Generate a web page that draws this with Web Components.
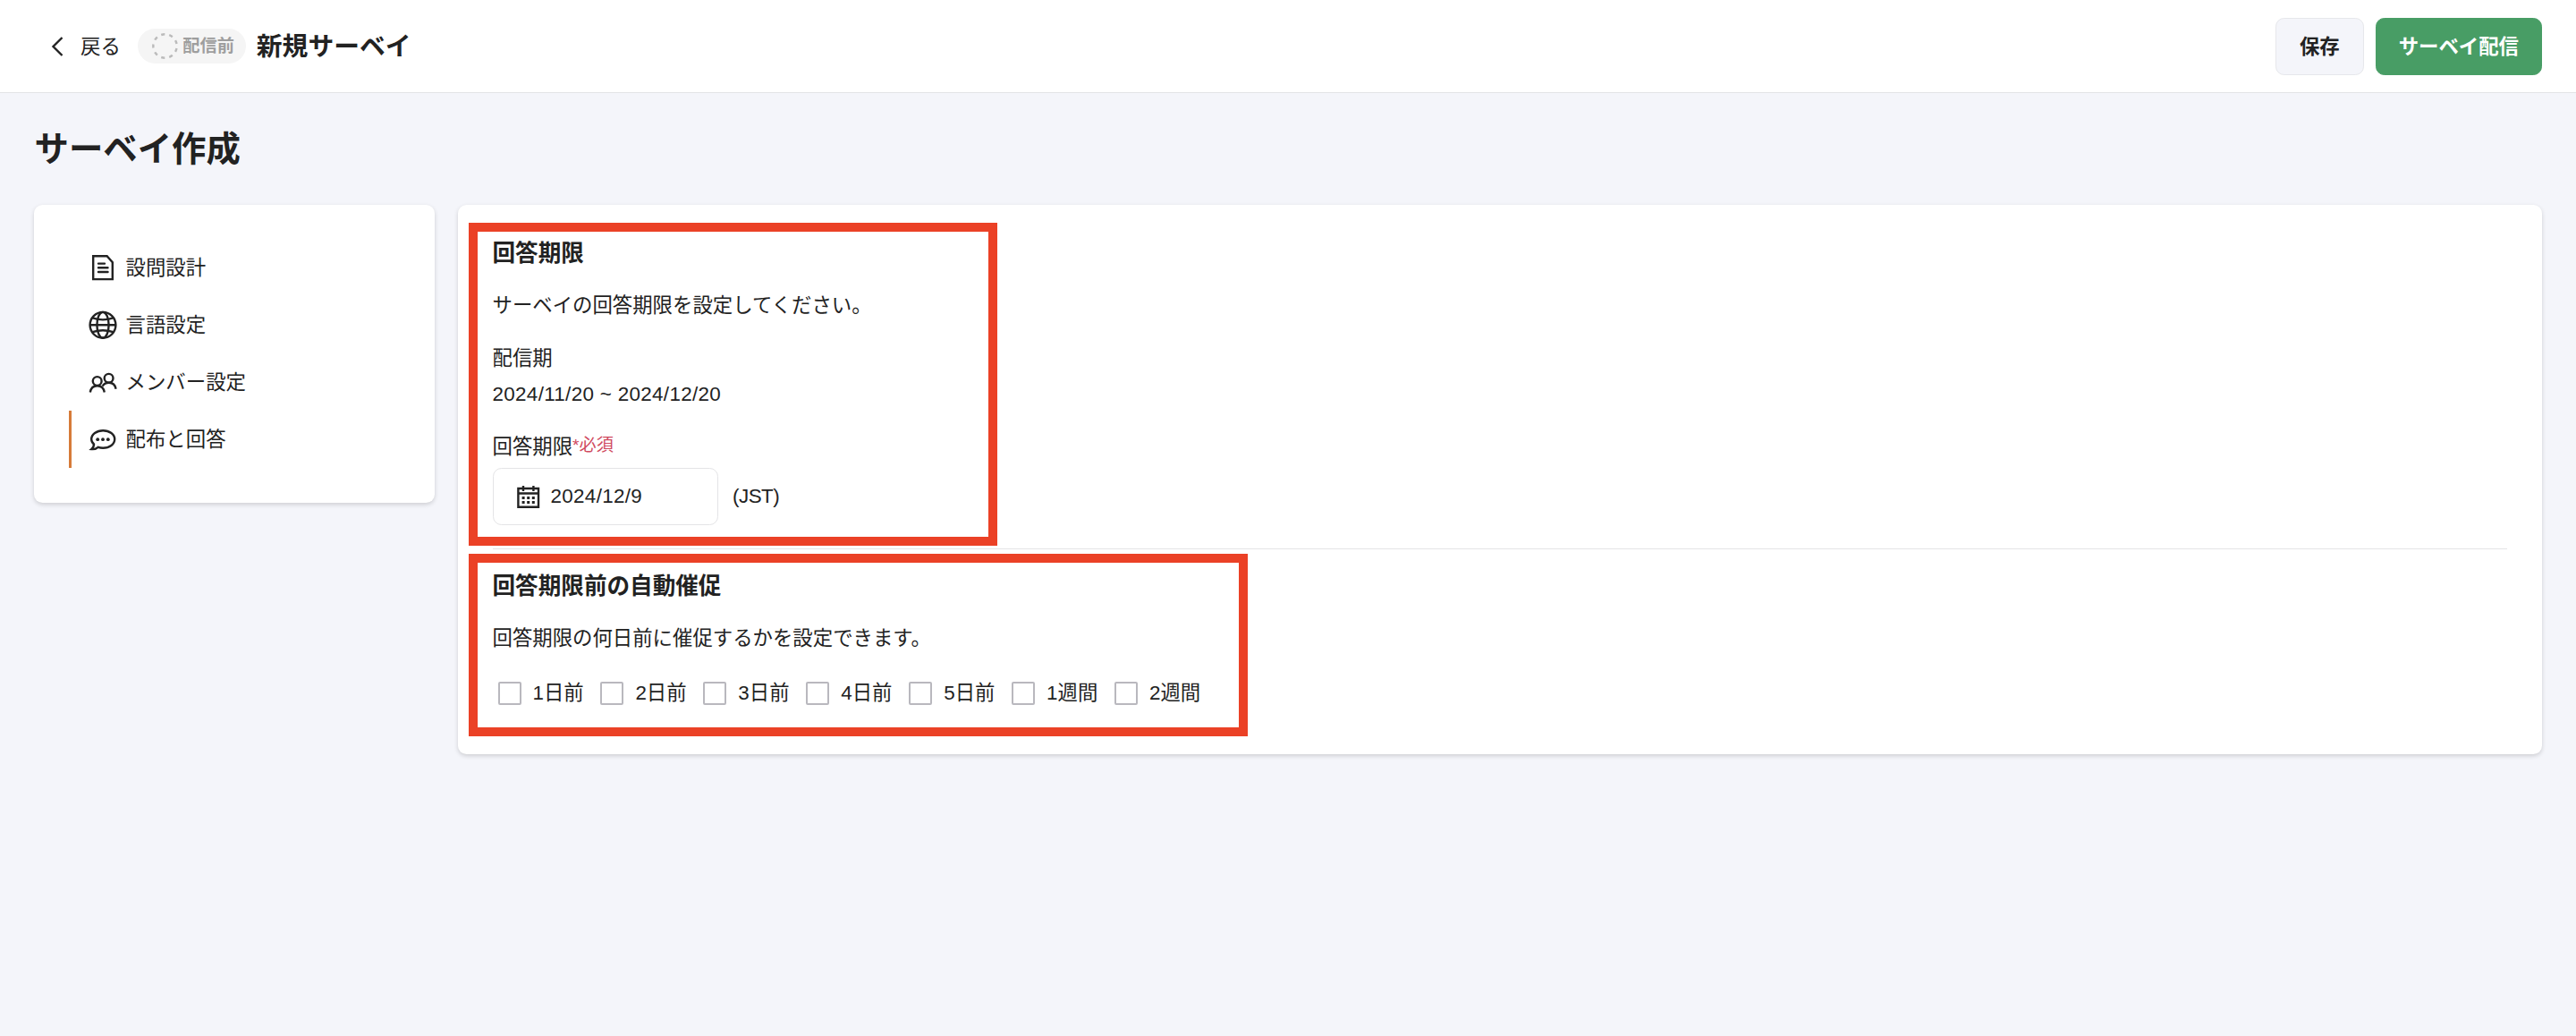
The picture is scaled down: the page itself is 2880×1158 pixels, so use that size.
<!DOCTYPE html>
<html lang="ja">
<head>
<meta charset="utf-8">
<title>新規サーベイ</title>
<style>
  body {
    margin: 0;
    min-height: 100vh;
    background: #f4f5fa;
    color: #222;
    font: 22.4px/32px "Liberation Sans", "Noto Sans CJK JP", sans-serif;
  }
  .columns {
    display: flex;
    align-items: flex-start;
    gap: 26px;
    padding: 0 38px;
  }
  side-menu {
    flex: 0 0 448px;
  }
  survey-panel {
    flex: 1;
  }
</style>
</head>
<body>
<survey-header>
  <status-badge slot="status">配信前</status-badge>
  <span slot="title">新規サーベイ</span>
  <action-button slot="actions">保存</action-button>
  <action-button slot="actions" class="primary">サーベイ配信</action-button>
</survey-header>
<page-title>サーベイ作成</page-title>
<div class="columns">
  <side-menu>
    <menu-item icon="document">設問設計</menu-item>
    <menu-item icon="globe">言語設定</menu-item>
    <menu-item icon="members">メンバー設定</menu-item>
    <menu-item icon="chat" class="active">配布と回答</menu-item>
  </side-menu>
  <survey-panel>
    <panel-section style="--frame-width: 591px; --frame-height: 361px">
      <span slot="heading">回答期限</span>
      <span slot="description">サーベイの回答期限を設定してください。</span>
      <form-field label="配信期" style="--field-gap: 8px"><span style="letter-spacing: 0.33px">2024/11/20 ~ 2024/12/20</span></form-field>
      <form-field label="回答期限" required><date-input value="2024/12/9">(JST)</date-input></form-field>
    </panel-section>
    <panel-section style="--frame-top: -21px; --frame-width: 871px; --frame-height: 204px">
      <span slot="heading">回答期限前の自動催促</span>
      <span slot="description">回答期限の何日前に催促するかを設定できます。</span>
      <reminder-options values="1日前,2日前,3日前,4日前,5日前,1週間,2週間"></reminder-options>
    </panel-section>
  </survey-panel>
</div>

<script>
const ICONS = {
  back: `<path d="M21.500 6 11.500 16l10 10"/>`,
  document: `<path d="M5.200 3.300h15.400l6.200 6.800v19H5.200z"/><path d="M11 11.600h7M11 16.300h10.500M11 21h10.500" stroke-linecap="round"/>`,
  globe: `<circle cx="16" cy="16.300" r="14.400"/><ellipse cx="16" cy="16.300" rx="6.600" ry="14.400"/><path d="M1.600 16.300h28.800M4.500 8.400Q16 12.400 27.500 8.400M4.500 24.200Q16 20.200 27.500 24.200"/>`,
  members: `<circle cx="9.700" cy="15" r="4.900"/><path d="M1.800 27.500C2.500 23 5.300 20.200 9.800 20.200s7.200 2.800 8 7.300"/><circle cx="22.600" cy="11.800" r="4.900"/><path d="M15.600 20.600c1.600-2.600 4-3.900 7.200-3.900 4.400 0 7 2.500 7.800 7"/>`,
  chat: `<path d="M6 21.500C4.200 20 3.200 18 3.200 16c0-5.500 5.800-9.700 13-9.700S29.200 10.500 29.200 16s-5.800 9.700-13 9.700c-2 0-3.900-.3-5.500-.9-2 1.900-4.600 2.600-7.500 2.300C5 25.600 6 23.700 6 21.500z"/><g fill="currentColor" stroke="none"><circle cx="10.200" cy="16.200" r="1.900"/><circle cx="16" cy="16.200" r="1.900"/><circle cx="21.800" cy="16.200" r="1.900"/></g>`,
  calendar: `<path d="M4.400 7h22.600v20.700H4.400zM4.400 12.500h22.600M10 4v6M21.400 4v6"/><g fill="currentColor" stroke="none"><path d="M8.600 16h3v3h-3zM14.200 16h3v3h-3zM19.800 16h3v3h-3zM8.600 21h3v3h-3zM14.200 21h3v3h-3zM19.800 21h3v3h-3z"/></g>`,
};

function icon(name) {
  return `<svg width="32" height="32" viewBox="0 0 32 32" fill="none" stroke="currentColor" stroke-width="2.4">${ICONS[name]}</svg>`;
}

class SurveyHeader extends HTMLElement {
  constructor() {
    super();
    this.attachShadow({ mode: "open" });
    this.shadowRoot.innerHTML = `
      <style>
        :host {
          display: flex;
          align-items: center;
          box-sizing: border-box;
          height: 104px;
          padding: 0 38px 0 48px;
          background: #fff;
          border-bottom: 1px solid #e3e4e6;
        }
        .back {
          display: flex;
          align-items: center;
          gap: 10px;
          margin-right: 19px;
        }
        .back span {
          padding-top: 2px;
        }
        .title {
          margin-left: 12px;
          font-size: 28.8px;
          font-weight: bold;
        }
        .actions {
          display: flex;
          gap: 13px;
          margin-left: auto;
        }
      </style>
      <div class="back">${icon("back")}<span>戻る</span></div>
      <slot name="status"></slot>
      <div class="title"><slot name="title"></slot></div>
      <div class="actions"><slot name="actions"></slot></div>
    `;
  }
}

class StatusBadge extends HTMLElement {
  constructor() {
    super();
    this.attachShadow({ mode: "open" });
    this.shadowRoot.innerHTML = `
      <style>
        :host {
          display: flex;
          align-items: center;
          gap: 5px;
          box-sizing: border-box;
          width: 121px;
          height: 39px;
          padding-left: 16.5px;
          border-radius: 20px;
          background: #f5f5f5;
          color: #9e9e9e;
          font-size: 19.2px;
          font-weight: bold;
        }
        svg {
          flex: none;
        }
      </style>
      <svg width="29" height="29" viewBox="0 0 29 29" fill="none" stroke="#bbb" stroke-width="2.4">
        <circle cx="14.500" cy="14.500" r="13.200" pathLength="90" stroke-dasharray="4.500 5.500" stroke-dashoffset="-2.750"/>
      </svg>
      <slot></slot>
    `;
  }
}

class ActionButton extends HTMLElement {
  constructor() {
    super();
    this.attachShadow({ mode: "open" });
    this.shadowRoot.innerHTML = `
      <style>
        :host {
          display: flex;
        }
        button {
          height: 64px;
          padding: 3px 26px 0;
          border: 1px solid #e6e7eb;
          border-radius: 9.6px;
          background: #f4f5fa;
          color: #222;
          font: inherit;
          font-weight: bold;
        }
        :host(.primary) button {
          border-color: #489d65;
          background: #489d65;
          color: #fff;
          padding: 3px 25px 0;
        }
      </style>
      <button><slot></slot></button>
    `;
  }
}

class PageTitle extends HTMLElement {
  constructor() {
    super();
    this.attachShadow({ mode: "open" });
    this.shadowRoot.innerHTML = `
      <style>
        :host {
          display: block;
          padding: 34px 38.5px 33px;
        }
        h1 {
          margin: 0;
          font-size: 38.4px;
          line-height: 58px;
        }
      </style>
      <h1><slot></slot></h1>
    `;
  }
}

class SideMenu extends HTMLElement {
  constructor() {
    super();
    this.attachShadow({ mode: "open" });
    this.shadowRoot.innerHTML = `
      <style>
        :host {
          display: block;
          box-sizing: border-box;
          padding: 38px 39px 39px;
          border-radius: 9.6px;
          background: #fff;
          box-shadow: 0 2px 5px rgba(0, 0, 0, 0.16);
        }
      </style>
      <slot></slot>
    `;
  }
}

class MenuItem extends HTMLElement {
  constructor() {
    super();
    this.attachShadow({ mode: "open" });
    this.shadowRoot.innerHTML = `
      <style>
        :host {
          display: flex;
          align-items: center;
          gap: 9.6px;
          box-sizing: border-box;
          height: 64px;
          padding-left: 19px;
          border-left: 3px solid transparent;
        }
        :host(.active) {
          border-left-color: #d67b39;
        }
        span {
          padding-top: 2px;
        }
      </style>
      ${icon(this.getAttribute("icon"))}
      <span><slot></slot></span>
    `;
  }
}

class SurveyPanel extends HTMLElement {
  constructor() {
    super();
    this.attachShadow({ mode: "open" });
    this.shadowRoot.innerHTML = `
      <style>
        :host {
          display: block;
          box-sizing: border-box;
          min-height: 614px;
          padding: 39px 39px 38px 38.5px;
          border-radius: 9.6px;
          background: #fff;
          box-shadow: 0 2px 5px rgba(0, 0, 0, 0.16);
        }
        ::slotted(:not(:last-child)) {
          padding-bottom: 26px;
          margin-bottom: 26px;
          border-bottom: 1px solid #e4e4e6;
        }
      </style>
      <slot></slot>
    `;
  }
}

class PanelSection extends HTMLElement {
  constructor() {
    super();
    this.attachShadow({ mode: "open" });
    this.shadowRoot.innerHTML = `
      <style>
        :host {
          display: block;
          position: relative;
        }
        /* red frame laid over the section */
        :host::after {
          content: "";
          position: absolute;
          top: var(--frame-top, -19px);
          left: -26.5px;
          box-sizing: border-box;
          width: var(--frame-width);
          height: var(--frame-height);
          border: 10px solid #eb4126;
          pointer-events: none;
        }
        h2 {
          margin: 0 0 27px;
          font-size: 25.6px;
          line-height: 31px;
        }
        p {
          margin: 0;
        }
      </style>
      <h2><slot name="heading"></slot></h2>
      <p><slot name="description"></slot></p>
      <slot></slot>
    `;
  }
}

class FormField extends HTMLElement {
  constructor() {
    super();
    this.attachShadow({ mode: "open" });
    const required = this.hasAttribute("required") ? `<span class="required">*必須</span>` : "";
    this.shadowRoot.innerHTML = `
      <style>
        :host {
          display: block;
          margin-top: 27px;
        }
        .label {
          display: flex;
          margin-bottom: var(--field-gap, 7px);
        }
        .required {
          color: #d04a60;
          font-size: 19.2px;
          line-height: 28px;
        }
      </style>
      <div class="label"><span>${this.getAttribute("label")}</span>${required}</div>
      <slot></slot>
    `;
  }
}

class DateInput extends HTMLElement {
  constructor() {
    super();
    this.attachShadow({ mode: "open" });
    this.shadowRoot.innerHTML = `
      <style>
        :host {
          display: flex;
          align-items: center;
          gap: 16px;
          letter-spacing: -0.5px;
        }
        .box {
          display: flex;
          align-items: center;
          gap: 9px;
          box-sizing: border-box;
          width: 252.5px;
          height: 64px;
          padding-left: 23px;
          border: 1px solid #e4e4e6;
          border-radius: 9.6px;
          letter-spacing: 0.33px;
        }
      </style>
      <div class="box">${icon("calendar")}<span>${this.getAttribute("value")}</span></div>
      <slot></slot>
    `;
  }
}

class ReminderOptions extends HTMLElement {
  constructor() {
    super();
    this.attachShadow({ mode: "open" });
    const options = this.getAttribute("values").split(",");
    this.shadowRoot.innerHTML = `
      <style>
        :host {
          display: flex;
          gap: 12.7px;
          margin-top: 26px;
        }
        label {
          display: flex;
          align-items: center;
          gap: 13px;
          height: 38px;
          padding-left: 6px;
        }
        input {
          appearance: none;
          box-sizing: border-box;
          width: 26px;
          height: 26px;
          margin: 0;
          border: 2px solid #b9b8be;
          border-radius: 2px;
          background: #fff;
        }
      </style>
      ${options.map((text) => `<label><input type="checkbox"><span>${text}</span></label>`).join("")}
    `;
  }
}

customElements.define("survey-header", SurveyHeader);
customElements.define("status-badge", StatusBadge);
customElements.define("action-button", ActionButton);
customElements.define("page-title", PageTitle);
customElements.define("side-menu", SideMenu);
customElements.define("menu-item", MenuItem);
customElements.define("survey-panel", SurveyPanel);
customElements.define("panel-section", PanelSection);
customElements.define("form-field", FormField);
customElements.define("date-input", DateInput);
customElements.define("reminder-options", ReminderOptions);
</script>
</body>
</html>
